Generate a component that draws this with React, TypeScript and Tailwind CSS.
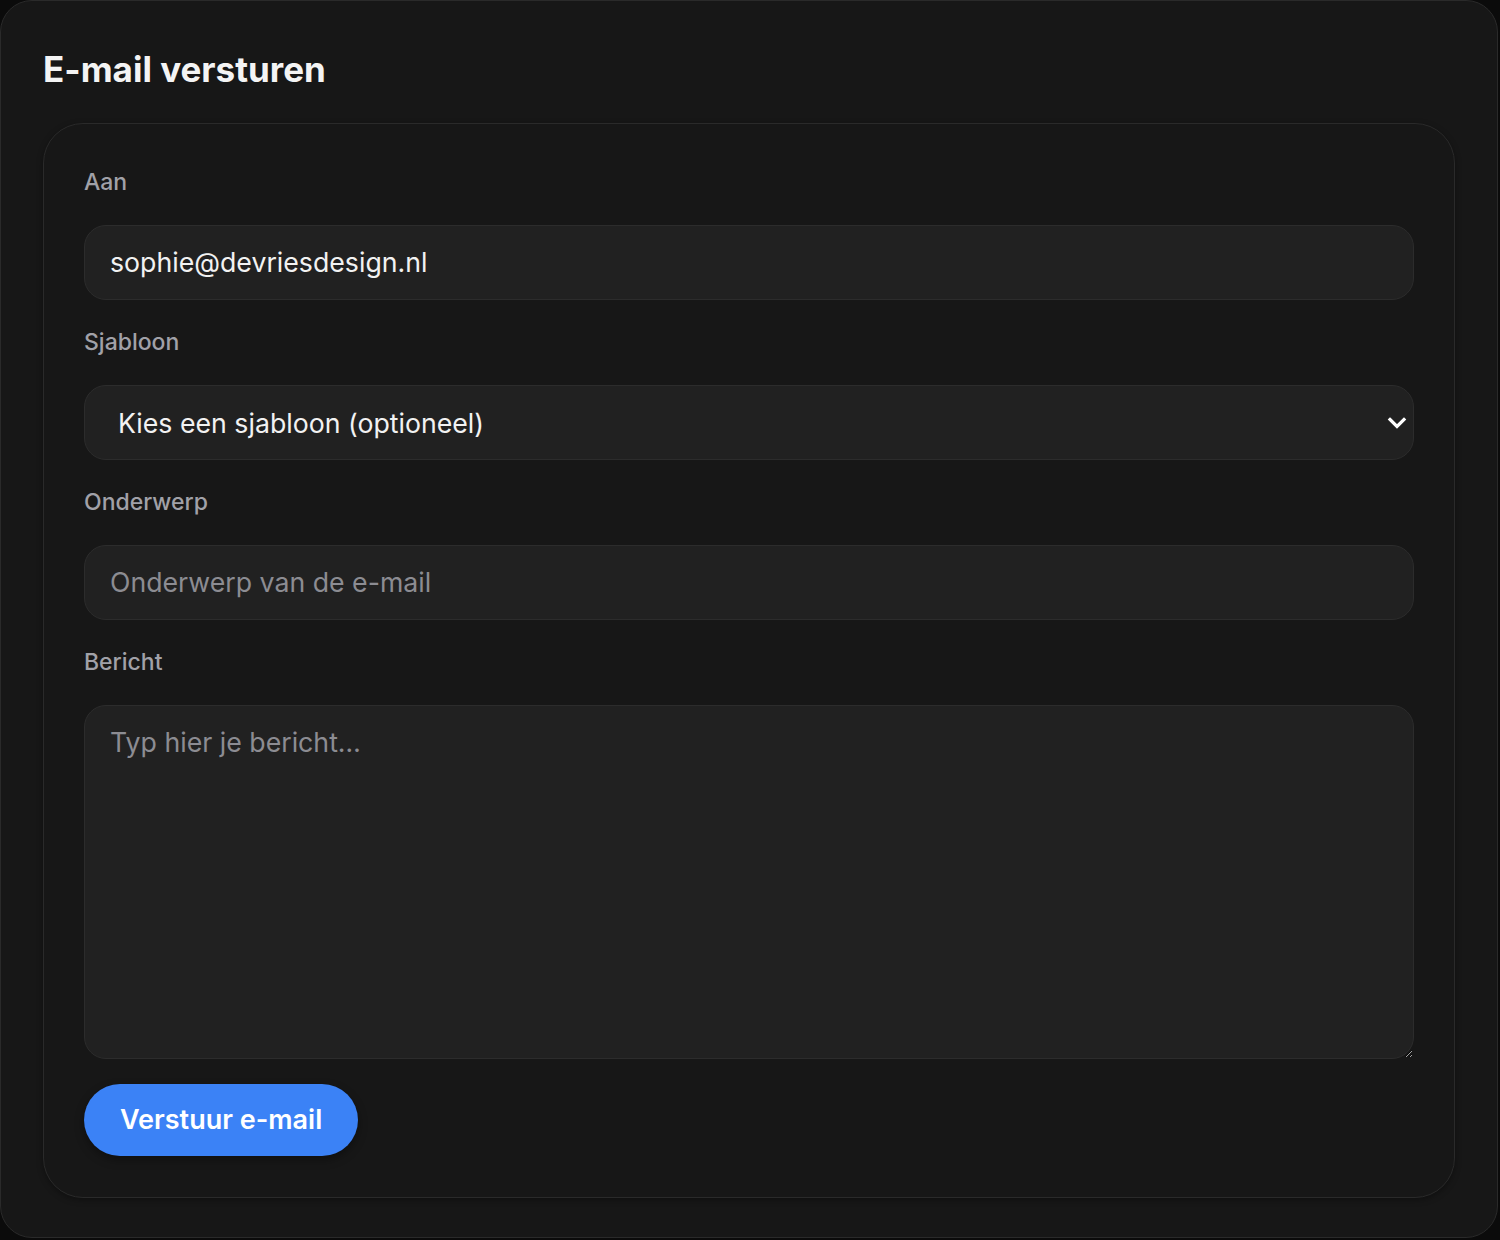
import { useState } from "react";

const labelClass = "block text-[23px] leading-[37px] font-medium text-[#a1a1a8] mb-6";
const fieldClass =
  "w-full h-[75px] rounded-[22px] border border-[#2c2c2c] bg-[#212121] px-[25px] text-[26.7px] text-[#f2f2f2] placeholder:text-[#8c8c92] outline-none";

export default function App() {
  const [to, setTo] = useState("sophie@devriesdesign.nl");
  const [subject, setSubject] = useState("");
  const [body, setBody] = useState("");

  return (
    <div
      className="min-h-[1240px] w-[1500px] bg-[#0b0b0b]"
      style={{ fontFamily: "Inter, 'Noto Sans', sans-serif" }}
    >
      <div className="w-[1498px] h-[1238px] rounded-[32px] border border-[#2a2a2a] bg-[#171717] px-[42px] pt-[44px]">
        <h1 className="text-[35px] leading-[48px] font-bold text-[#f4f4f4] mb-[30px]">
          E-mail versturen
        </h1>

        <div className="rounded-[40px] border border-[#2a2a2a] bg-[#171717] px-10 pt-10 pb-[41px] shadow-[0_2px_6px_rgba(0,0,0,0.35)]">
          <div className="flex flex-col gap-6">
            <div>
              <label className={labelClass}>Aan</label>
              <input
                className={fieldClass + " pb-[2px]"}
                value={to}
                onChange={(e) => setTo(e.target.value)}
              />
            </div>

            <div>
              <label className={labelClass}>Sjabloon</label>
              <div className="relative">
                <select className={fieldClass + " appearance-none pl-[33px] pt-[1px]"} defaultValue="">
                  <option value="">Kies een sjabloon (optioneel)</option>
                  <option value="offerte">Offerte</option>
                  <option value="factuur">Factuur</option>
                </select>
                <svg
                  className="pointer-events-none absolute right-[7px] top-1/2 -translate-y-1/2"
                  width="20"
                  height="20"
                  viewBox="0 0 20 20"
                  fill="none"
                >
                  <path
                    d="M3 6.5l7 7 7-7"
                    stroke="#ffffff"
                    strokeWidth="3.2"
                    strokeLinecap="square"
                  />
                </svg>
              </div>
            </div>

            <div>
              <label className={labelClass}>Onderwerp</label>
              <input
                className={fieldClass + " pb-[2px]"}
                placeholder="Onderwerp van de e-mail"
                value={subject}
                onChange={(e) => setSubject(e.target.value)}
              />
            </div>

            <div>
              <label className={labelClass}>Bericht</label>
              <textarea
                className="block w-full h-[354px] rounded-[22px] border border-[#2c2c2c] bg-[#212121] px-[25px] py-[18px] text-[26.7px] leading-[36px] text-[#f2f2f2] placeholder:text-[#8c8c92] outline-none"
                placeholder="Typ hier je bericht…"
                value={body}
                onChange={(e) => setBody(e.target.value)}
              />
            </div>

            <div className="mt-px">
              <button className="h-[72px] rounded-full bg-[#3b82f6] px-9 text-[27px] font-semibold text-white shadow-[0_4px_10px_rgba(0,0,0,0.35)]">
                Verstuur e-mail
              </button>
            </div>
          </div>
        </div>
      </div>
    </div>
  );
}
